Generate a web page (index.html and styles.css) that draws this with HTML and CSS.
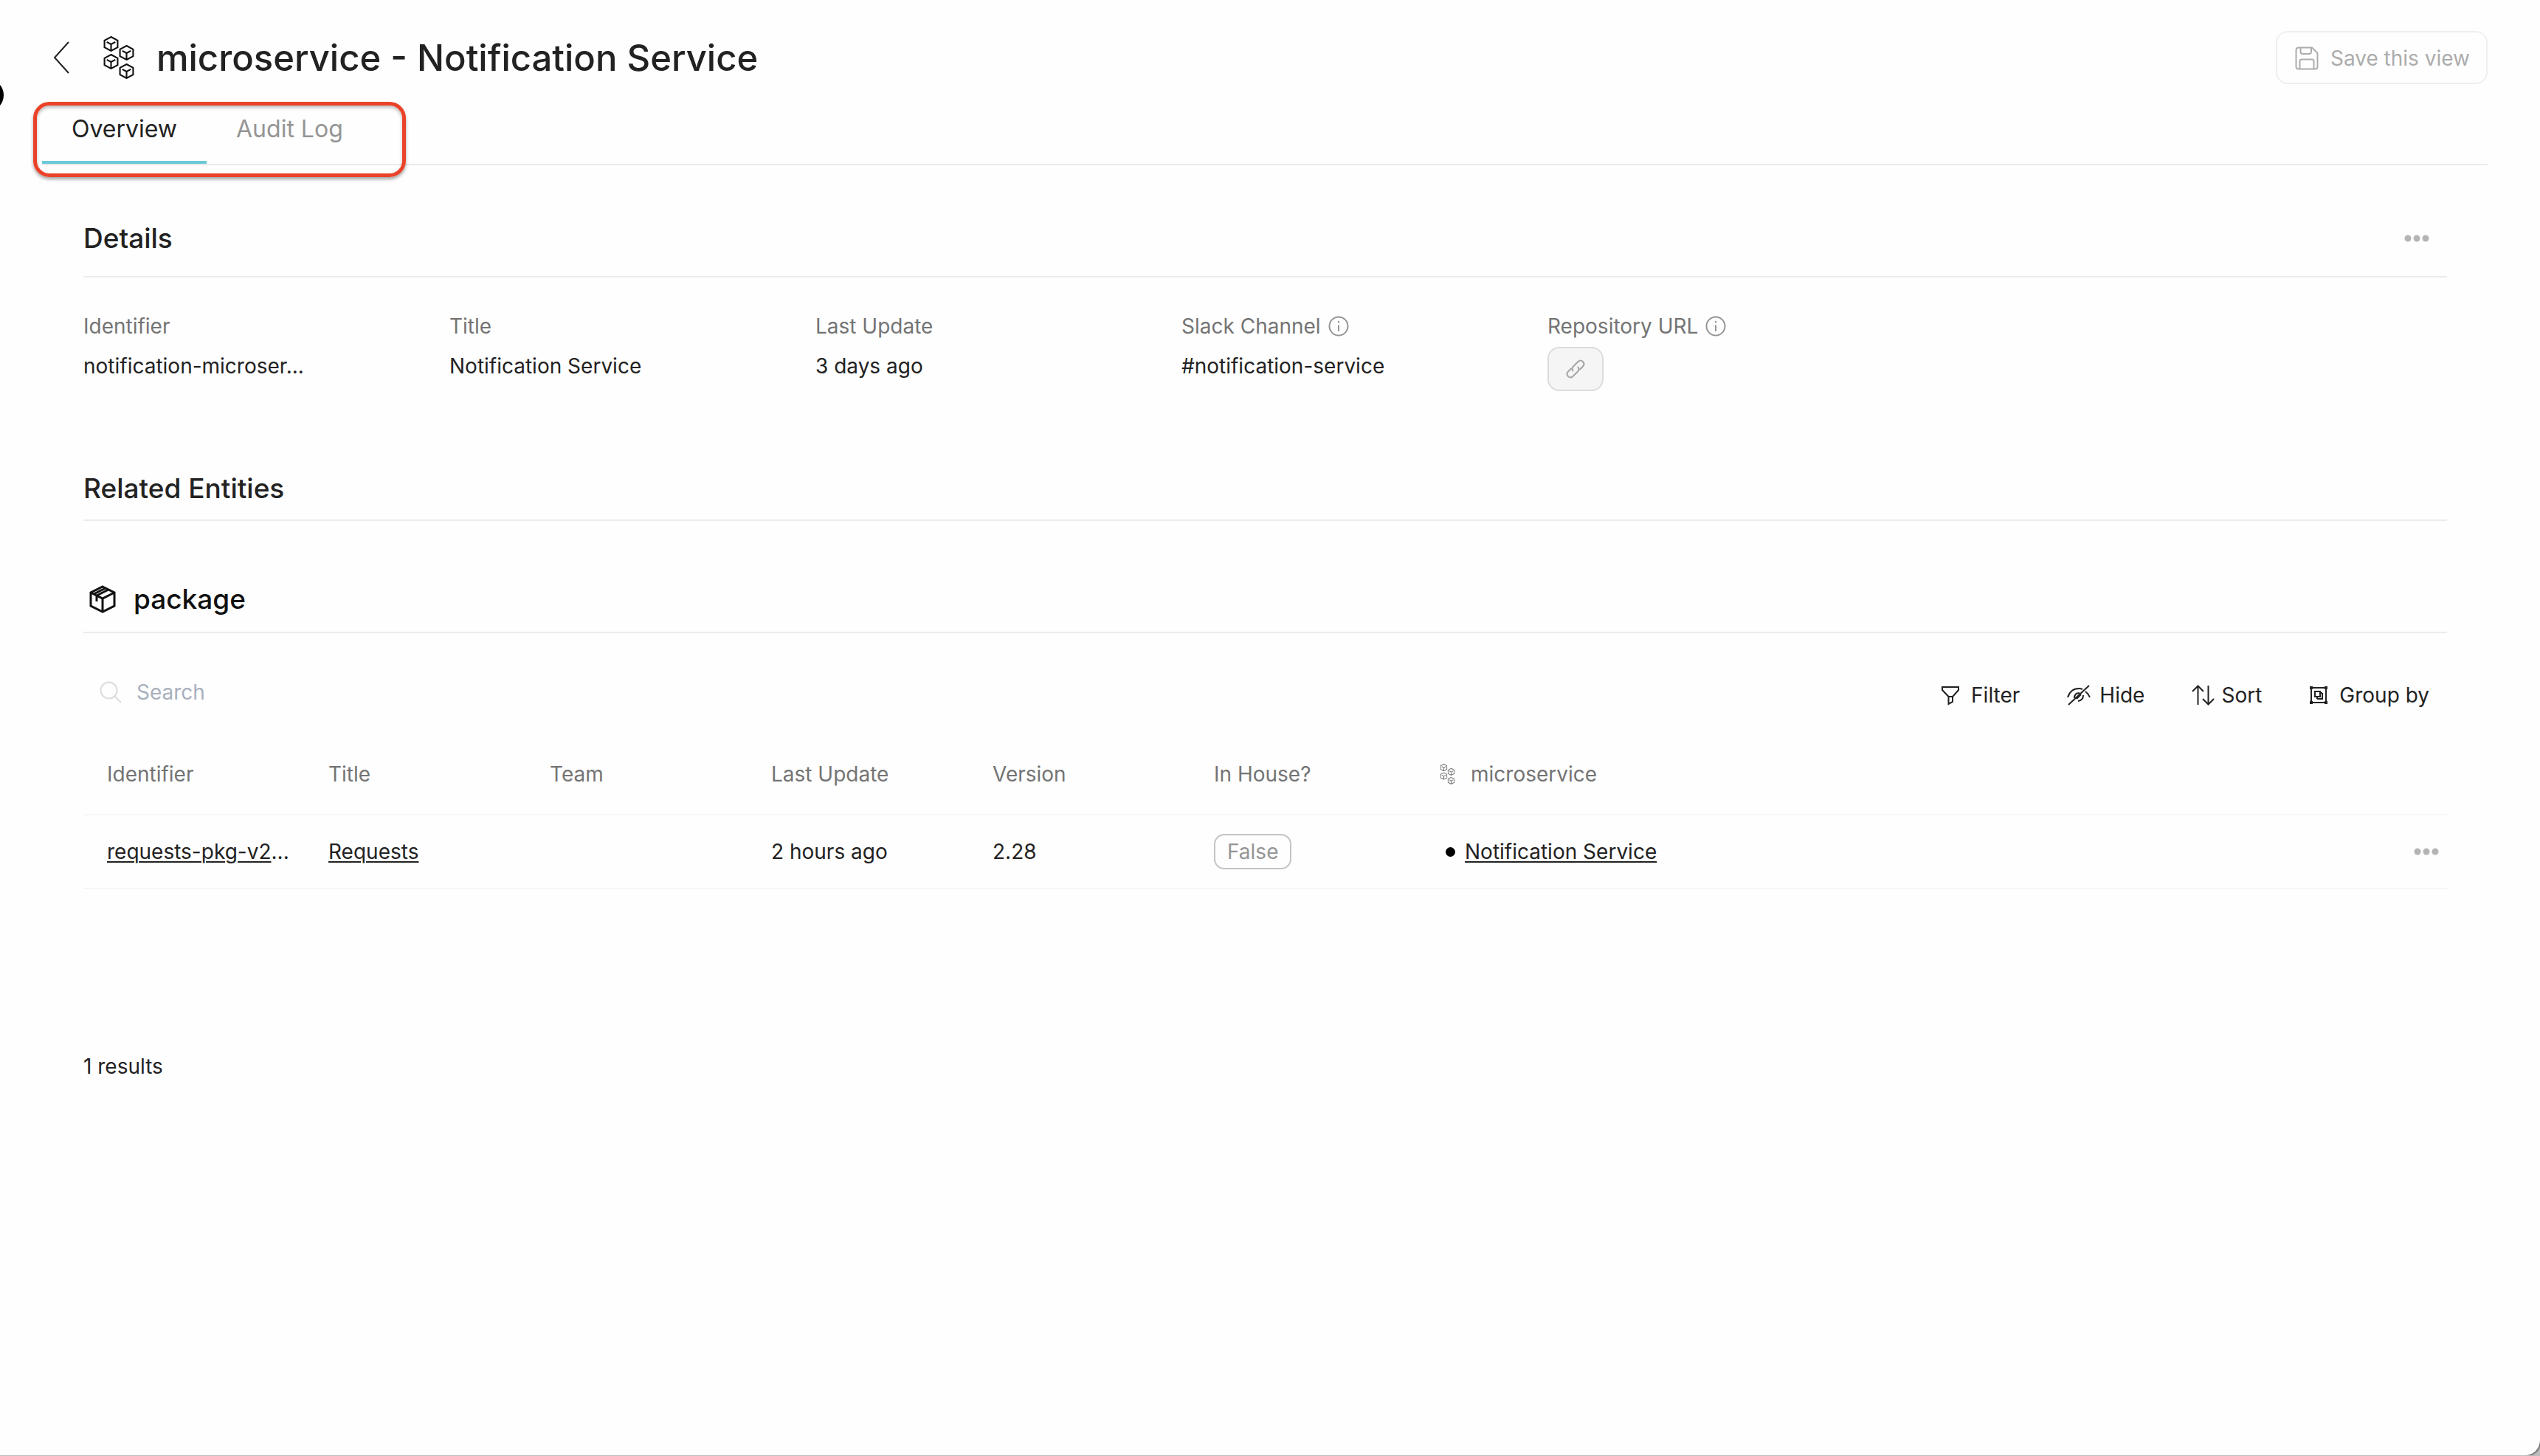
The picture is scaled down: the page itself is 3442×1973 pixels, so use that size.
FILE: index.html
```html
<!DOCTYPE html>
<html lang="en">
<head>
<meta charset="utf-8">
<title>microservice - Notification Service</title>
<link rel="stylesheet" href="styles.css">
</head>
<body>
<svg width="0" height="0" class="sprite" aria-hidden="true">
  <symbol id="cube" viewBox="0 0 20 20">
    <path d="M10 1 L18.5 5.5 V14.5 L10 19 L1.5 14.5 V5.5 Z M4.5 7.500 L10 10.500 L15.500 7.500 M10 10.500 V19"/>
  </symbol>
  <symbol id="services" viewBox="0 0 42 58">
    <use href="#cube" x="0" y="0" width="21" height="21"/>
    <use href="#cube" x="21" y="12" width="21" height="21"/>
    <use href="#cube" x="0" y="24" width="21" height="21"/>
    <use href="#cube" x="21" y="37" width="21" height="21"/>
  </symbol>
  <symbol id="info" viewBox="0 0 28 28">
    <circle cx="14" cy="14" r="12.500"/><path d="M14 12.500 V21 M14 7 V9.500"/>
  </symbol>
  <symbol id="dots" viewBox="0 0 34 10">
    <circle cx="5" cy="5" r="4.500"/><circle cx="17" cy="5" r="4.500"/><circle cx="29" cy="5" r="4.500"/>
  </symbol>
</svg>
<div class="window">
  <span class="edge-dot"></span>
  <header class="header">
    <button class="plain" aria-label="Back"><svg class="icon-back" viewBox="0 0 22 44"><path d="M21 1 L2 22 L21 43"/></svg></button>
    <svg class="icon-services"><use href="#services"/></svg>
    <h1 class="title">microservice - Notification Service</h1>
    <button class="save" disabled>
      <svg class="icon-save" viewBox="0 0 32 32"><path d="M5 1.500 H23 L30.500 9 V27 Q30.500 30.500 27 30.500 H5 Q1.500 30.500 1.500 27 V5 Q1.500 1.500 5 1.500 Z M7.500 1.500 V7 Q7.500 10 10.500 10 H19 Q22 10 22 7 V1.500 M6.500 30.500 V20 Q6.500 17.500 9 17.500 H23 Q25.500 17.500 25.500 20 V30.500"/></svg>
      Save this view
    </button>
  </header>
  <nav class="tabs">
    <button class="tab tab-active">Overview</button>
    <button class="tab">Audit Log</button>
    <span class="highlight"></span>
  </nav>
  <main class="content">
    <section>
      <div class="heading heading-details">
        <h2>Details</h2>
        <button class="plain more" aria-label="More"><svg class="icon-dots"><use href="#dots"/></svg></button>
      </div>
      <dl class="fields">
        <div class="field"><dt>Identifier</dt><dd>notification-microser...</dd></div>
        <div class="field"><dt>Title</dt><dd>Notification Service</dd></div>
        <div class="field"><dt>Last Update</dt><dd>3 days ago</dd></div>
        <div class="field"><dt>Slack Channel <svg class="icon-info"><use href="#info"/></svg></dt><dd>#notification-service</dd></div>
        <div class="field"><dt>Repository URL <svg class="icon-info"><use href="#info"/></svg></dt><dd class="flush"><button class="link-button" aria-label="Open repository"><svg class="icon-link" viewBox="0 0 28 28"><path d="M11 17 Q8 13.500 11 10.500 L17.500 4 Q20.500 1 24 4 Q27 7.500 24 10.500 L19.500 15 M17 11 Q20 14.500 17 17.500 L10.500 24 Q7.500 27 4 24 Q1 20.500 4 17.500 L8.500 13"/></svg></button></dd></div>
      </dl>
    </section>
    <section>
      <div class="heading heading-related"><h2>Related Entities</h2></div>
      <div class="heading heading-package">
        <svg class="icon-package" viewBox="0 0 36 38"><path d="M18 2 L34 10 V28 L18 36 L2 28 V10 Z M2 10 L18 18 L34 10 M18 18 V36 M10 14 L26 6 M10 14 V22 M6 12 L22 4"/></svg>
        <h2>package</h2>
      </div>
      <div class="toolbar">
        <label class="search">
          <svg class="icon-search" viewBox="0 0 30 30"><circle cx="12.500" cy="12.500" r="11"/><path d="M20.500 20.500 L29 29"/></svg>
          <input type="text" placeholder="Search" aria-label="Search">
        </label>
        <div class="tools">
          <button class="tool tool-wide"><svg class="icon-tool" viewBox="0 0 26 28"><path d="M2 3 H24 V7 L16 16 V23 L10.500 26 V16 L2 7 Z M10.500 16 H16"/></svg>Filter</button>
          <button class="tool"><svg class="icon-tool icon-eye" viewBox="0 0 32 28"><path d="M1 17 Q5 5 16 5 Q19 5 21 6 M25 9 Q29 12 31 17 M2 27 L30 1 M10 18 Q10 11 17 11 M15 22 Q22 21 22 14 M13 19 L19 13"/></svg>Hide</button>
          <button class="tool tool-tight"><svg class="icon-tool icon-eye" viewBox="0 0 32 28"><path d="M8.500 27 V2 M1 9 L8.500 1.500 L16 9 M22.500 1 V26 M15 19 L22.500 26.500 L30 19"/></svg>Sort</button>
          <button class="tool tool-wide"><svg class="icon-tool" viewBox="0 0 26 28"><path d="M3 4 H23 V24 H3 Z M8 9 H15 V16 H8 Z M18 11 V19 H11 M18 11 H15 M11 19 V16"/><path class="solid" d="M1 2 H5 V6 H1 Z M21 2 H25 V6 H21 Z M1 22 H5 V26 H1 Z M21 22 H25 V26 H21 Z"/></svg>Group by</button>
        </div>
      </div>
      <table class="entities">
        <colgroup><col class="col"><col class="col"><col class="col"><col class="col"><col class="col"><col class="col"><col><col class="col-actions"></colgroup>
        <thead>
          <tr><th>Identifier</th><th>Title</th><th>Team</th><th>Last Update</th><th>Version</th><th>In House?</th><th><span class="relation"><svg class="icon-relation"><use href="#services"/></svg>microservice</span></th><th></th></tr>
        </thead>
        <tbody>
          <tr>
            <td><a href="#">requests-pkg-v2</a>...</td>
            <td><a href="#">Requests</a></td>
            <td></td>
            <td>2 hours ago</td>
            <td>2.28</td>
            <td><span class="badge">False</span></td>
            <td><span class="relation-item"><span class="bullet"></span><a href="#">Notification Service</a></span></td>
            <td class="actions"><button class="plain" aria-label="Row actions"><svg class="icon-dots"><use href="#dots"/></svg></button></td>
          </tr>
        </tbody>
      </table>
      <p class="results">1 results</p>
    </section>
  </main>
</div>
</body>
</html>
```
FILE: styles.css
```css
* { box-sizing: border-box; }

body {
  margin: 0;
  background: #bdbdbd;
  color: #222;
  font: 400 28px/40px Inter, "Liberation Sans", sans-serif;
}

h1, h2, p, dl, dd { margin: 0; }

button {
  font: inherit;
  color: inherit;
  background: none;
  border: 0;
  padding: 0;
}

a { color: inherit; text-underline-offset: 3px; text-decoration-thickness: 2px; }

svg { display: block; flex: none; fill: none; stroke: currentColor; stroke-width: 2; }

.sprite { position: absolute; }

.window {
  position: relative;
  min-height: calc(100vh - 1px);
  background: #fefefe;
  border-radius: 0 0 20px 0;
  box-shadow: 0 0 3px 1px #333;
  overflow: hidden;
}

.edge-dot {
  position: absolute;
  left: -39px;
  top: 107px;
  width: 44px;
  height: 44px;
  border-radius: 50%;
  background: #000;
}

/* Header */
.header {
  display: flex;
  align-items: center;
  padding: 42px 71px 0 72px;
}

.icon-back { width: 22px; height: 44px; }
.icon-services { width: 42px; height: 58px; margin: 0 30px 0 46px; color: #111; }

.title {
  flex: 1;
  padding-top: 2px;
  font-size: 49px;
  line-height: 70px;
  font-weight: 500;
}

.save {
  display: flex;
  align-items: center;
  gap: 16px;
  height: 72px;
  padding: 2px 22px 0 24px;
  border: 2px solid #efefef;
  border-radius: 16px;
  color: #acacac;
}

.icon-save { width: 32px; height: 32px; }

/* Tabs */
.tabs {
  position: relative;
  display: flex;
  margin: 24px 71px 0 57px;
  border-bottom: 2px solid #eaeaea;
}

.tab {
  padding: 17px 40px 23px;
  border-bottom: 4px solid transparent;
  font-size: 32px;
  color: #959595;
}

.tab-active { color: #222; border-bottom-color: #6bcad8; }

.highlight {
  position: absolute;
  left: -12px;
  top: 0;
  width: 505px;
  height: 102px;
  border: 5px solid #ea4228;
  border-radius: 22px;
  box-shadow: 0 3px 4px rgba(0, 0, 0, .35), inset 0 3px 4px rgba(0, 0, 0, .25);
}

/* Sections */
.content { padding: 48px 126px 0 113px; }

.heading {
  display: flex;
  align-items: center;
  border-bottom: 2px solid #eaeaf0;
}

.heading h2 { font-size: 37px; line-height: 40px; font-weight: 500; }
.heading-details { height: 104px; }
.heading-related { height: 86px; margin-top: 90px; }
.heading-package { height: 90px; margin-top: 62px; padding-left: 8px; gap: 24px; color: #111; }
.icon-package { width: 36px; height: 38px; stroke-width: 3; }

.more { margin: 0 24px 0 auto; }
.icon-dots { width: 34px; height: 10px; fill: #b4b4b4; stroke: none; }

.fields {
  display: grid;
  grid-template-columns: repeat(5, 496px);
  padding-top: 46px;
}

.field { display: flex; flex-direction: column; gap: 8px; }
.field dt { display: flex; align-items: center; gap: 10px; color: #747474; }
.field dd { padding: 6px 0; }
.field .flush { padding: 0; }
.icon-info { width: 28px; height: 28px; color: #959595; }

.link-button {
  display: grid;
  place-items: center;
  width: 76px;
  height: 60px;
  border: 2px solid #dcdcdc;
  border-radius: 16px;
  background: #f5f5f5;
  color: #a5a5a5;
}

.icon-link { width: 28px; height: 28px; }

/* Toolbar */
.toolbar {
  display: flex;
  justify-content: space-between;
  align-items: flex-start;
  padding: 50px 24px 22px 22px;
}

.search { display: flex; align-items: center; gap: 20px; height: 60px; }
.icon-search { width: 30px; height: 30px; color: #dcdcdc; }

.search input {
  width: 400px;
  padding: 0;
  border: 0;
  background: none;
  font: inherit;
}

.search input::placeholder { color: #a9b0be; opacity: 1; }

.tools { display: flex; gap: 64px; padding-top: 4px; }
.tool { display: flex; align-items: center; gap: 12px; height: 60px; }
.tool-wide { gap: 15px; }
.tool-tight { gap: 8px; }
.icon-tool { width: 26px; height: 28px; }
.icon-eye { width: 32px; height: 28px; }
.solid { fill: currentColor; stroke: none; }

/* Table */
.entities { width: 100%; table-layout: fixed; border-collapse: collapse; }
.col { width: 300px; }
.col-actions { width: 100px; }

.entities th, .entities td {
  padding: 0 0 0 32px;
  border-bottom: 2px solid #f6f6f7;
  text-align: left;
  font-weight: 400;
  white-space: nowrap;
}

.entities th { height: 110px; color: #747474; }
.entities td { height: 100px; }

.relation { display: flex; align-items: center; gap: 21px; padding-left: 6px; }
.icon-relation { width: 21px; height: 28px; stroke-width: 2; }
.relation-item { display: flex; align-items: center; gap: 13px; padding-left: 14px; }
.bullet { width: 13px; height: 13px; border-radius: 50%; background: #000; }

.badge {
  display: inline-block;
  padding: 2px 16px;
  border: 2px solid #c4c4c4;
  border-radius: 14px;
  color: #959595;
}

.entities .actions { padding: 0 11px 0 0; }
.actions .plain { display: block; margin-left: auto; }

.results { padding: 220px 0 40px; }
```
